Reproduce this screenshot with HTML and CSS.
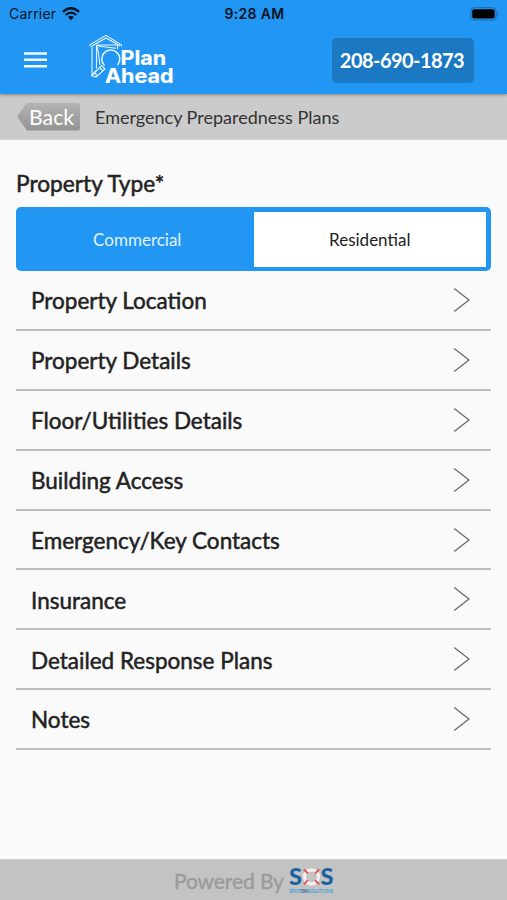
FILE: index.html
```html
<!DOCTYPE html>
<html lang="en">
<head>
<meta charset="utf-8">
<title>Emergency Preparedness Plans</title>
<link rel="stylesheet" href="styles.css">
</head>
<body>
<header class="top">
  <div class="status">
    <div class="carrier"><span>Carrier</span>
      <svg width="18" height="14" viewBox="0 0 18 14" fill="none" stroke="#07131d" stroke-width="2.3"><path d="M.9 4.9Q9-2.3 17.1 4.9"/><path d="M3.7 8Q9 3.3 14.3 8"/><path d="M6.1 10.1Q9 7.5 11.9 10.1L9 13.2Z" fill="#07131d" stroke="none"/></svg>
    </div>
    <div class="time">9:28 AM</div>
    <svg class="battery" width="30" height="14" viewBox="0 0 30 14"><rect x=".7" y=".7" width="25.5" height="12.4" rx="3.5" fill="none" stroke="#1b6dab"/><rect x="2.2" y="2.2" width="22.5" height="9.4" rx="2" fill="#000"/><path d="M27.5 4.6Q29.6 6.9 27.5 9.2Z" fill="#1b6dab"/></svg>
  </div>
  <div class="bar">
    <svg class="menu" width="23" height="16" viewBox="0 0 23 16" fill="#f4faff"><path d="M0 .2h23v2.5H0zM0 6.6h23v2.5H0zM0 13h23v2.5H0z"/></svg>
    <svg class="logo" width="88" height="56" viewBox="0 0 88 56">
      <g fill="none" stroke="#e8f5ff" stroke-width="1.1">
        <path d="M1 14.4V12.8L17 3.4 32.5 13V14.4M3 14L17 6 31 14"/>
        <path d="M3 14V43.5L7.5 38M7.5 13V36.5M7.5 13H28.5V17M8.5 14L27 16.2M8.5 15L11 33"/>
        <path d="M15.5 33.5A9 9 0 1 1 28.5 33" stroke-width="1.5"/>
        <path d="M3 43.5L12.5 33.5 16 37 7 45ZM4.5 40.5L8.5 43.5M10.5 35.5L14 39"/>
      </g>
      <g class="logo-text"><text x="31.5" y="32.5" textLength="45.5" lengthAdjust="spacingAndGlyphs">Plan</text><text x="16" y="51.3" textLength="68.5" lengthAdjust="spacingAndGlyphs">Ahead</text></g>
    </svg>
    <a class="phone">208-690-1873</a>
  </div>
</header>
<div class="crumb">
  <a class="back">Back</a>
  <span class="title">Emergency Preparedness Plans</span>
</div>
<main>
  <h1>Property Type*</h1>
  <div class="toggle"><div class="on">Commercial</div><div class="off">Residential</div></div>
  <ul>
    <li><span>Property Location</span><svg width="18" height="26" viewBox="0 0 18 26"><path d="M1.2 1.5L16 13 1.2 24.5"/></svg></li>
    <li><span>Property Details</span><svg width="18" height="26" viewBox="0 0 18 26"><path d="M1.2 1.5L16 13 1.2 24.5"/></svg></li>
    <li><span>Floor/Utilities Details</span><svg width="18" height="26" viewBox="0 0 18 26"><path d="M1.2 1.5L16 13 1.2 24.5"/></svg></li>
    <li><span>Building Access</span><svg width="18" height="26" viewBox="0 0 18 26"><path d="M1.2 1.5L16 13 1.2 24.5"/></svg></li>
    <li><span>Emergency/Key Contacts</span><svg width="18" height="26" viewBox="0 0 18 26"><path d="M1.2 1.5L16 13 1.2 24.5"/></svg></li>
    <li><span>Insurance</span><svg width="18" height="26" viewBox="0 0 18 26"><path d="M1.2 1.5L16 13 1.2 24.5"/></svg></li>
    <li><span>Detailed Response Plans</span><svg width="18" height="26" viewBox="0 0 18 26"><path d="M1.2 1.5L16 13 1.2 24.5"/></svg></li>
    <li><span>Notes</span><svg width="18" height="26" viewBox="0 0 18 26"><path d="M1.2 1.5L16 13 1.2 24.5"/></svg></li>
  </ul>
</main>
<footer>
  <span>Powered By</span>
  <svg class="sos" width="46" height="34" viewBox="0 -4 46 34">
    <text class="s" x="0" y="18" textLength="13" lengthAdjust="spacingAndGlyphs">S</text><text class="s" x="31.5" y="18" textLength="13" lengthAdjust="spacingAndGlyphs">S</text>
    <circle cx="22.5" cy="9.8" r="7" fill="none" stroke="#f3efed" stroke-width="3.2"/>
    <path d="M14.8 2.3l4.2 4.2M30.2 2.3l-4.2 4.2M14.8 17.3l4.2-4.2M30.2 17.3l-4.2-4.2" stroke="#df554f" stroke-width="1.8"/>
    <text class="tag" x="0" y="25.5" textLength="44" lengthAdjust="spacingAndGlyphs">SPOT<tspan fill="#175a96">ON</tspan>SOLUTIONS</text>
  </svg>
</footer>
</body>
</html>
```
FILE: styles.css
```css
* { box-sizing: border-box; }
body { margin: 0; height: 900px; display: flex; flex-direction: column; background: #fafafa; color: #222; font-family: Lato, "Liberation Sans", sans-serif; overflow: hidden; }
svg { display: block; flex: none; overflow: visible; }
.top { height: 94px; flex: none; background: #2196f3; box-shadow: 0 1px 3px rgba(0,0,0,.35); position: relative; }
.status { height: 28px; display: grid; grid-template-columns: 1fr auto 1fr; align-items: center; padding: 0 7px 0 9px; font: 14px/28px Inter, sans-serif; color: #07131d; }
.carrier { display: flex; align-items: center; gap: 6px; letter-spacing: .2px; }
.time { font-weight: 600; letter-spacing: .3px; }
.battery { justify-self: end; }
.bar { height: 66px; display: flex; align-items: center; padding: 0 33px 0 24px; }
.menu { margin-top: -2px; }
.logo { margin: 0 0 2px 42px; }
.logo-text { font: 700 20px Inter, sans-serif; fill: #fff; stroke: #fff; stroke-width: .2px; }
.phone { margin: -2px 0 0 auto; width: 142px; height: 45px; padding-right: 2px; border-radius: 5px; background: #1b78c2; color: #fff; font-size: 20px; letter-spacing: -.55px; font-weight: 700; line-height: 45px; text-align: center; white-space: nowrap; }
.crumb { height: 46px; flex: none; background: #cbcbcb; display: flex; align-items: center; padding: 0 17px; border-bottom: 1px solid #d3d3d3; }
.back { width: 63px; height: 28px; padding-left: 12px; background: linear-gradient(#b4b4b4, #929292); clip-path: polygon(0 50%, 10px 0, 100% 0, 100% 100%, 10px 100%); border-radius: 3px; color: #fff; font-size: 21.3px; line-height: 29px; }
.title { margin-left: 15px; font-size: 18px; color: #333; }
main { padding: 0 16px; flex: 1; }
h1 { margin: 30px 0 9px; font-size: 22.7px; line-height: 28px; font-weight: 400; -webkit-text-stroke: .5px #222; }
.toggle { height: 64px; border: 5px solid #2196f3; border-radius: 5px; display: grid; grid-template-columns: 1fr 1fr; line-height: 55px; text-align: center; font-size: 17px; }
.on { background: #2196f3; color: #e2f3ff; }
.off { background: #fff; }
ul { list-style: none; margin: 0; padding: 0; }
li { height: 59.9px; display: flex; align-items: center; justify-content: space-between; padding: 0 20px 0 15px; border-bottom: 2px solid #bdbdbd; font-size: 22.5px; }
li span { padding-top: 1.6px; -webkit-text-stroke: .5px #222; }
li svg { fill: none; stroke: #666; stroke-width: 1.2; }
footer { height: 41px; flex: none; background: #c3c3c3; border-top: 1px solid #d0d0d0; display: flex; align-items: center; padding-left: 174px; font-size: 21px; color: #9b9b9b; }
footer span { -webkit-text-stroke: .4px #9b9b9b; letter-spacing: -.1px; }
.sos { margin: 0 0 0 5px; }
.s { font: 900 23px Lato, sans-serif; fill: #1962a1; }
.tag { font: 700 6px Lato, sans-serif; fill: #3ba2ce; }
```
